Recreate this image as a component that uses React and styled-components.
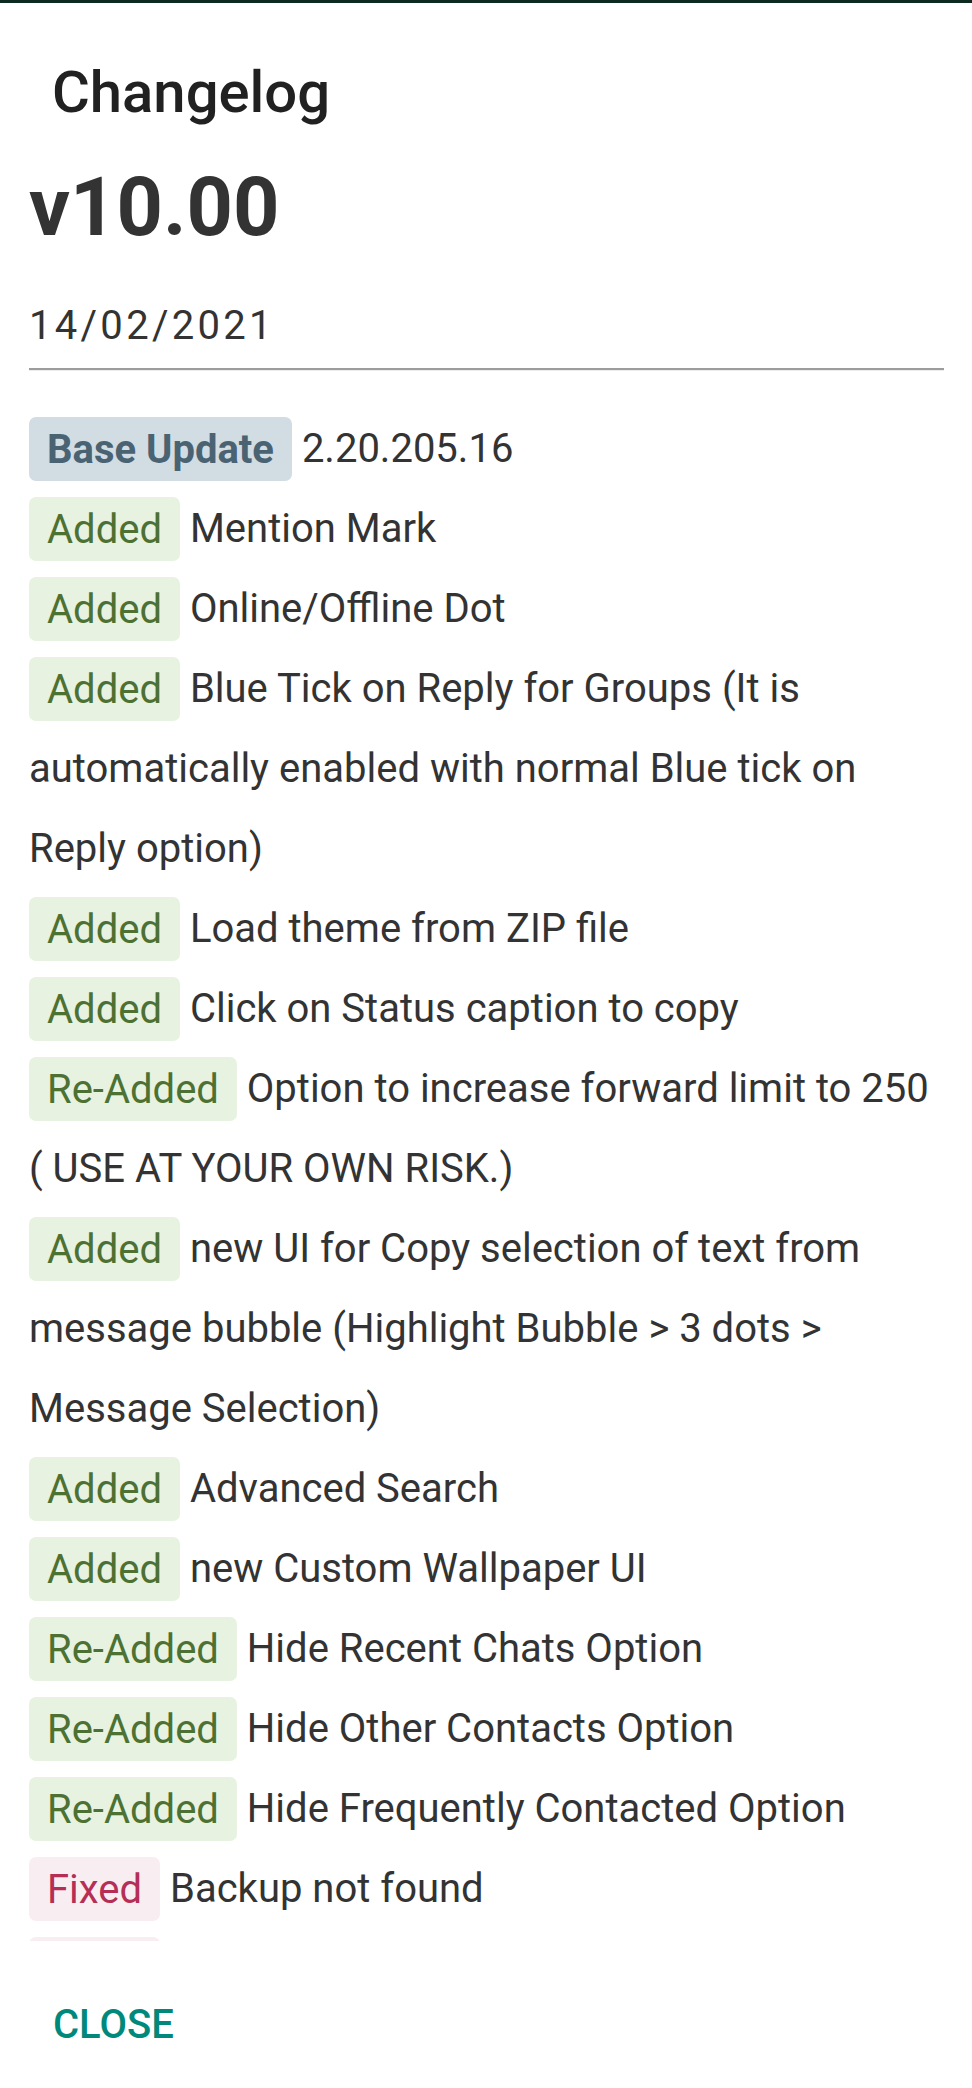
import React from "react";
import styled, { createGlobalStyle } from "styled-components";

const Global = createGlobalStyle`
  html, body { margin: 0; padding: 0; background: #ffffff; }
  body { font-family: Roboto, "Noto Sans", "Liberation Sans", sans-serif; }
  * { box-sizing: border-box; }
`;

const Screen = styled.div`
  width: 972px;
  height: 2088px;
  display: flex;
  flex-direction: column;
  background: #ffffff;
  overflow: hidden;
`;

const TopEdge = styled.div`
  height: 3px;
  flex: none;
  background: #0d2a20;
`;

const Title = styled.h2`
  margin: 0;
  padding: 60px 0 0 52px;
  flex: none;
  font-size: 58px;
  line-height: 58px;
  font-weight: 500;
  color: #212121;
`;

const Scroll = styled.div`
  flex: 1;
  overflow: hidden;
  padding: 46px 28px 0 29px;
`;

const Version = styled.h1`
  margin: 0;
  font-size: 81px;
  line-height: 81px;
  font-weight: 700;
  color: #333333;
`;

const DateLine = styled.div`
  margin-top: 58px;
  font-size: 40px;
  line-height: 40px;
  letter-spacing: 3.3px;
  color: #333333;
`;

const Rule = styled.hr`
  margin: 22px 0 0 0;
  height: 0;
  border: none;
  border-top: 2px solid #9c9c9c;
  border-bottom: 1px solid #ececec;
`;

const List = styled.div`
  margin-top: 38px;
`;

const Item = styled.div`
  font-size: 40px;
  line-height: 80px;
  color: #333333;
`;

const tones = {
  base: { bg: "#d2dce3", fg: "#4a6373", weight: 700 },
  added: { bg: "#e7f2e1", fg: "#4d7033", weight: 400 },
  fixed: { bg: "#f8eef1", fg: "#b62e55", weight: 400 },
};

const Badge = styled.span`
  display: inline;
  padding: 8.5px 18px;
  border-radius: 7px;
  background: ${(p) => tones[p.$tone].bg};
  color: ${(p) => tones[p.$tone].fg};
  font-weight: ${(p) => tones[p.$tone].weight};
`;

const Footer = styled.div`
  flex: none;
  height: 147px;
  padding: 64px 0 0 53px;
`;

const CloseButton = styled.button`
  margin: 0;
  padding: 0;
  border: none;
  background: none;
  font-family: Roboto, "Noto Sans", "Liberation Sans", sans-serif;
  font-size: 40px;
  line-height: 40px;
  font-weight: 500;
  color: #00897b;
  text-transform: uppercase;
  cursor: pointer;
`;

const items = [
  ["base", "Base Update", "2.20.205.16"],
  ["added", "Added", "Mention Mark"],
  ["added", "Added", "Online/Offline Dot"],
  ["added", "Added", "Blue Tick on Reply for Groups (It is automatically enabled with normal Blue tick on Reply option)"],
  ["added", "Added", "Load theme from ZIP file"],
  ["added", "Added", "Click on Status caption to copy"],
  ["added", "Re-Added", "Option to increase forward limit to 250 ( USE AT YOUR OWN RISK.)"],
  ["added", "Added", "new UI for Copy selection of text from message bubble (Highlight Bubble > 3 dots > Message Selection)"],
  ["added", "Added", "Advanced Search"],
  ["added", "Added", "new Custom Wallpaper UI"],
  ["added", "Re-Added", "Hide Recent Chats Option"],
  ["added", "Re-Added", "Hide Other Contacts Option"],
  ["added", "Re-Added", "Hide Frequently Contacted Option"],
  ["fixed", "Fixed", "Backup not found"],
  ["fixed", "Fixed", "Bugs"],
];

export default function App() {
  return (
    <Screen>
      <Global />
      <TopEdge />
      <Title>Changelog</Title>
      <Scroll>
        <Version>v10.00</Version>
        <DateLine>14/02/2021</DateLine>
        <Rule />
        <List>
          {items.map(([tone, label, text], i) => (
            <Item key={i}>
              <Badge $tone={tone}>{label}</Badge> {text}
            </Item>
          ))}
        </List>
      </Scroll>
      <Footer>
        <CloseButton>Close</CloseButton>
      </Footer>
    </Screen>
  );
}
